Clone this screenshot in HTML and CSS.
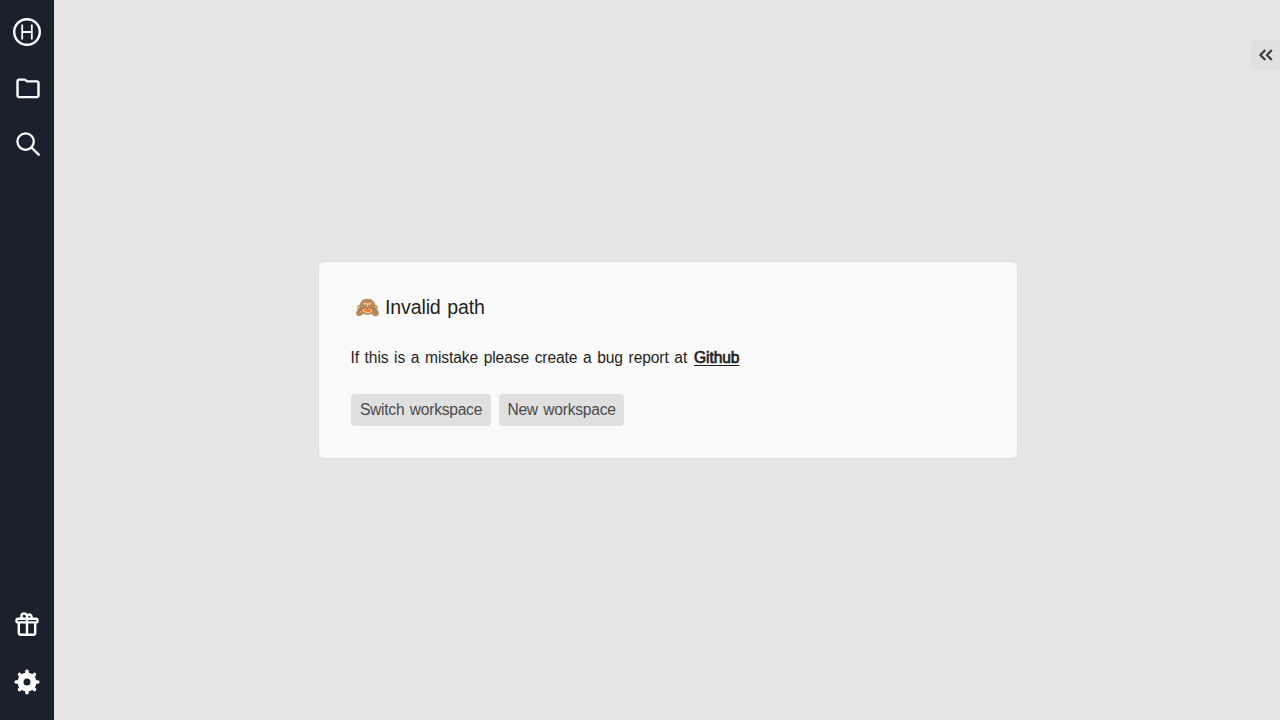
FILE: index.html
```html
<!DOCTYPE html>
<html lang="en">
<head>
<meta charset="utf-8">
<title>Invalid path</title>
<link rel="stylesheet" href="styles.css">
</head>
<body>
<div class="app">
  <nav class="sidebar">
    <a class="item"><svg width="28" height="28" viewBox="0 0 28 28"><circle cx="14" cy="14" r="12.8" stroke-width="2.4"/><path d="M9.2 6.6v14.8M18.8 6.6v14.8M9.2 14h9.6" stroke-width="1.8"/></svg></a>
    <a class="item folder"><svg width="26" height="26" viewBox="0 0 26 26"><path d="M4.300 4.600h5.400q.8 0 1.300.9t1.400.9h9.300a1.800 1.800 0 0 1 1.800 1.800v12.100a1.800 1.800 0 0 1-1.800 1.800H4.300a1.800 1.800 0 0 1-1.800-1.800V6.400A1.800 1.800 0 0 1 4.300 4.600z" stroke-width="2.4"/></svg></a>
    <a class="item search"><svg width="26" height="26" viewBox="0 0 26 26"><circle cx="10.6" cy="10.6" r="8.2" stroke-width="2.3"/><path d="M16.500 16.500l7.200 7.200" stroke-width="2.4"/></svg></a>
    <span class="spacer"></span>
    <a class="item gift"><svg width="26" height="26" viewBox="0 0 26 26"><path d="M4 7.800h18a1.500 1.500 0 0 1 1.500 1.500v.6a1.500 1.500 0 0 1-1.500 1.500H4a1.500 1.500 0 0 1-1.500-1.500v-.6A1.500 1.500 0 0 1 4 7.800zM4.800 11.500v10.300a2 2 0 0 0 2 2h12.400a2 2 0 0 0 2-2V11.500M13 7.800v16M13 7.800H9.600A2.700 2.700 0 1 1 12.800 4.900M13 7.800V5.800a2.300 2.300 0 1 1 3.800 1.800" stroke-width="2.4"/></svg></a>
    <a class="item gear"><svg width="26" height="26" viewBox="0 0 26 26"><circle cx="13" cy="13" r="6.500" stroke-width="6"/><path d="M13 4.500V2.200M13 21.500v2.300M4.500 13H2.200M21.500 13h2.300M7 7L5.500 5.500M19 7l1.500-1.500M7 19l-1.500 1.500M19 19l1.500 1.500" stroke-width="3.600" stroke-linecap="round"/></svg></a>
  </nav>
  <main class="content">
    <section class="card">
      <h1 class="title"><span class="emoji">🙈</span><span class="heading">Invalid path</span></h1>
      <p class="message"><span class="lead">If this is a mistake please create a bug report at</span><a class="link">Github</a></p>
      <div class="actions"><button class="button switch">Switch workspace</button><button class="button create">New workspace</button></div>
    </section>
    <button class="collapse" aria-label="Expand"><svg width="16" height="16" viewBox="0 0 16 16"><path d="M7.300 3L2.400 8l4.900 5M13.800 3L8.900 8l4.900 5" stroke-width="2.300"/></svg></button>
  </main>
</div>
</body>
</html>
```
FILE: styles.css
```css
* { box-sizing: border-box; }
body { margin: 0; font-family: "Liberation Sans", sans-serif; font-size: 15.6px; letter-spacing: -0.1px; word-spacing: 1.4px; color: #1f1f1f; }
svg { display: block; fill: none; stroke: currentColor; stroke-linejoin: round; }
.app { display: flex; height: 100vh; }
.sidebar { width: 54px; background: #1a202c; color: #fff; display: flex; flex-direction: column; align-items: center; padding: 4px 0 9px; }
.item { height: 56px; display: flex; align-items: center; }
.gear { height: 58px; }
.gift { padding-bottom: 2px; }
.folder, .search { padding-left: 2px; }
.search { stroke-linecap: round; }
.spacer { flex: 1; }
.content { flex: 1; position: relative; background: #e6e6e6; display: flex; align-items: center; justify-content: center; padding-left: 2px; }
.card { width: 700px; height: 198px; padding: 31px 31px; background: #fafafa; border: 1px solid #dfdfdf; border-radius: 6px; }
.title { margin: 0 0 25px; height: 28px; display: flex; align-items: center; font-size: 19.6px; font-weight: 400; line-height: 28px; letter-spacing: -0.15px; }
.emoji { width: 35px; padding-left: 4.5px; font-size: 20px; letter-spacing: 0; }
.message { display: flex; margin: 0 0 24px; line-height: 24px; white-space: nowrap; padding-left: 0.5px; }
.lead { width: 343.5px; }
.link { text-decoration: underline; text-decoration-thickness: 1px; text-underline-offset: 2px; -webkit-text-stroke: 0.7px currentColor; }
.actions { display: flex; gap: 8px; padding-left: 1px; }
.button { height: 32px; padding: 0 8px; border: 0; border-radius: 4px; background: #e0e0e0; color: #4a4a4a; font: inherit; letter-spacing: -0.25px; word-spacing: inherit; white-space: nowrap; }
.switch { width: 140px; }
.create { width: 125px; }
.collapse { position: absolute; top: 40px; right: 0; width: 29px; height: 30px; padding: 0 0 0 7px; border: 0; border-radius: 4px 0 0 4px; background: #e0e0e0; color: #404040; }
```
